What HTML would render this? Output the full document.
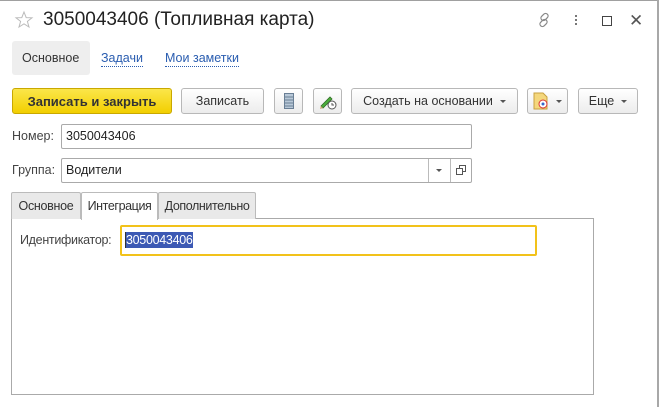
<!DOCTYPE html>
<html><head><meta charset="utf-8"><style>
*{box-sizing:border-box;margin:0;padding:0}
body{width:659px;height:407px;background:#fff;font-family:"Liberation Sans",Arial,sans-serif;font-size:12px;color:#333;position:relative;overflow:hidden}
.a{position:absolute}
.btn{position:absolute;top:88px;height:26px;border:1px solid #b8b8b8;border-radius:3px;background:linear-gradient(#fff,#ececec);font-size:12.5px;color:#333;display:flex;align-items:center;justify-content:center;white-space:nowrap}
.inp{position:absolute;border:1px solid #aaa;border-radius:2px;background:#fff;height:25px;font-size:12.5px;color:#222;padding-left:4px;line-height:23px}
.tab{position:absolute;top:192px;height:27px;border:1px solid #bbb;border-bottom:none;background:#e9e9e9;font-size:12.5px;color:#333;text-align:center;line-height:26px;border-radius:2px 2px 0 0;white-space:nowrap}
.dd{display:inline-block;width:0;height:0;border-left:3px solid transparent;border-right:3px solid transparent;border-top:3px solid #555;margin-left:7px;vertical-align:middle}
</style></head><body>
<div class="a" style="left:0;top:0;width:659px;height:1px;background:#a0a0a0"></div>
<div class="a" style="left:657px;top:0;width:2px;height:407px;background:#a8a8a8"></div>

<svg class="a" style="left:14px;top:10px" width="20" height="20" viewBox="0 0 20 20"><path d="M10 2 L12.2 7.6 L18 7.8 L13.4 11.4 L15 17 L10 13.8 L5 17 L6.6 11.4 L2 7.8 L7.8 7.6 Z" fill="none" stroke="#bbb" stroke-width="1"/></svg>
<div class="a" style="left:43px;top:9px;font-size:19px;color:#222">3050043406 (Топливная карта)</div>

<svg class="a" style="left:535px;top:11px" width="18" height="18" viewBox="0 0 18 18"><g fill="none" stroke="#888" stroke-width="1.2"><rect x="7" y="2" width="5" height="8" rx="2.5" transform="rotate(45 9.5 6)"/><rect x="6" y="8" width="5" height="8" rx="2.5" transform="rotate(45 8.5 12)"/></g></svg>
<div class="a" style="left:575px;top:15px;width:2px;height:2px;background:#777;box-shadow:0 4px #777,0 8px #777"></div>
<div class="a" style="left:602px;top:16px;width:10px;height:10px;border:1.5px solid #444"></div>
<div class="a" style="left:629px;top:11px;font-size:17px;color:#555">✕</div>

<div class="a" style="left:12px;top:41px;width:78px;height:34px;background:#eee;border-radius:3px"></div>
<div class="a" style="left:22px;top:51px;font-size:12.5px;color:#333">Основное</div>
<div class="a" style="left:101px;top:51px;font-size:12.5px;color:#2a5db0;border-bottom:1px dotted #2a5db0;line-height:15px">Задачи</div>
<div class="a" style="left:165px;top:51px;font-size:12.5px;color:#2a5db0;border-bottom:1px dotted #2a5db0;line-height:15px">Мои заметки</div>

<div class="btn" style="left:12px;width:160px;background:linear-gradient(#fbe64a,#f2cf00);border-color:#c9a800;font-weight:bold;color:#333;font-size:13px">Записать и закрыть</div>
<div class="btn" style="left:181px;width:83px">Записать</div>
<div class="btn" style="left:274px;width:29px"><svg width="10" height="16"><rect x="0.5" y="0.5" width="9" height="15" fill="#b8c8d8" stroke="#6a7f95"/><path d="M1 4h8M1 7h8M1 10h8M1 13h8" stroke="#6a7f95"/></svg></div>
<div class="btn" style="left:313px;width:29px"><svg width="18" height="18"><path d="M2 14 L11 5 L13 7 L4 16 Z" fill="#4cae3c" stroke="#2f6d24" stroke-width=".8"/><path d="M2 14 L1 17 L4 16Z" fill="#c9a06b"/><circle cx="13" cy="13" r="4" fill="#fff" stroke="#555"/><path d="M13 11v2h2" stroke="#555" fill="none"/></svg></div>
<div class="btn" style="left:351px;width:167px">Создать на основании<span class="dd"></span></div>
<div class="btn" style="left:527px;width:41px"><svg width="16" height="18"><path d="M1 1h9l4 4v12H1Z" fill="#f4d77c" stroke="#c8a040"/><circle cx="10" cy="12" r="4" fill="#fff" stroke="#d33"/><circle cx="10" cy="12" r="1.5" fill="#36c"/></svg><span class="dd"></span></div>
<div class="btn" style="left:578px;width:60px">Еще<span class="dd"></span></div>

<div class="a" style="left:12px;top:129px;font-size:12.5px;color:#444">Номер:</div>
<div class="inp" style="left:61px;top:124px;width:411px">3050043406</div>
<div class="a" style="left:12px;top:163px;font-size:12.5px;color:#444">Группа:</div>
<div class="inp" style="left:61px;top:158px;width:411px">Водители</div>
<div class="a" style="left:428px;top:159px;width:1px;height:23px;background:#bbb"></div>
<div class="a" style="left:450px;top:159px;width:1px;height:23px;background:#bbb"></div>
<div class="a" style="left:436px;top:169px;border-left:3px solid transparent;border-right:3px solid transparent;border-top:3px solid #555"></div>
<svg class="a" style="left:456px;top:165px" width="10" height="10"><rect x="3.5" y=".5" width="6" height="6" fill="#fff" stroke="#555"/><rect x=".5" y="3.5" width="6" height="6" fill="#fff" stroke="#555"/></svg>

<div class="a" style="left:11px;top:218px;width:583px;height:177px;border:1px solid #aaa;background:#fff"></div>
<div class="tab" style="left:11px;width:70px;letter-spacing:-.3px">Основное</div>
<div class="tab" style="left:158px;width:98px;letter-spacing:-.4px">Дополнительно</div>
<div class="tab" style="left:81px;width:77px;background:#fff;height:28px;letter-spacing:-.4px">Интеграция</div>

<div class="a" style="left:20px;top:233px;font-size:12.5px;color:#444;letter-spacing:-.3px">Идентификатор:</div>
<div class="a" style="left:120px;top:225px;width:417px;height:31px;border:2px solid #f2c21a;border-radius:2px"></div>
<div class="a" style="left:125px;top:232px;width:1px;height:16px;background:#333"></div>
<div class="a" style="left:126px;top:232px;font-size:12.5px;color:#fff;line-height:16px;background:#3c59b4;letter-spacing:-.3px">3050043406</div>
</body></html>
